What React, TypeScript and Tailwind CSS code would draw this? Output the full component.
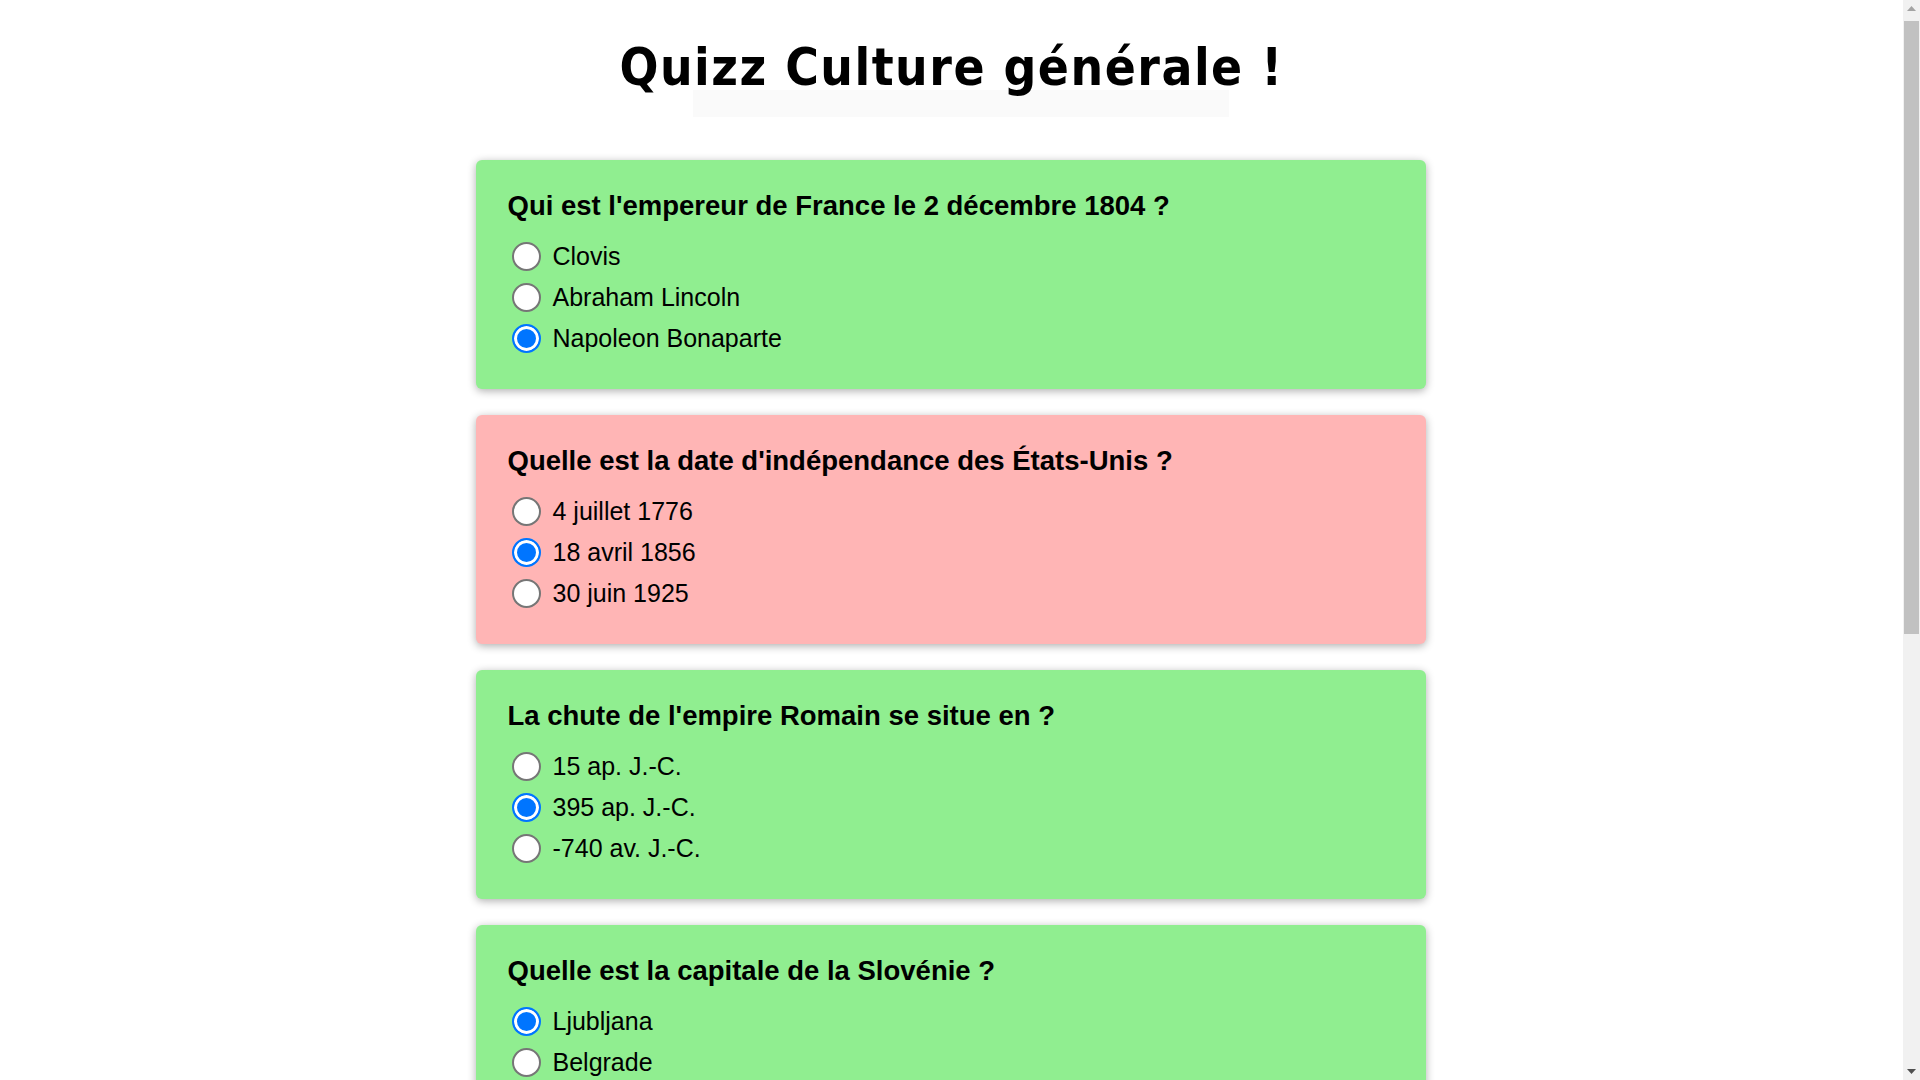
import React from 'react';

type Question = {
    id: number;
    label: string;
    options: string[];
    selected: number;
    correct: boolean;
};

const questions: Question[] = [
    { id: 1, label: "Qui est l'empereur de France le 2 décembre 1804 ?", options: ['Clovis', 'Abraham Lincoln', 'Napoleon Bonaparte'], selected: 2, correct: true },
    { id: 2, label: "Quelle est la date d'indépendance des États-Unis ?", options: ['4 juillet 1776', '18 avril 1856', '30 juin 1925'], selected: 1, correct: false },
    { id: 3, label: "La chute de l'empire Romain se situe en ?", options: ['15 ap. J.-C.', '395 ap. J.-C.', '-740 av. J.-C.'], selected: 1, correct: true },
    { id: 4, label: 'Quelle est la capitale de la Slovénie ?', options: ['Ljubljana', 'Belgrade', 'Bratislava'], selected: 0, correct: true },
    { id: 5, label: 'Quel est le plus long fleuve de France ?', options: ['La Seine', 'La Loire', 'Le Rhône'], selected: 1, correct: true },
    { id: 6, label: 'Combien de joueurs compte une équipe de football ?', options: ['9', '11', '15'], selected: 1, correct: true },
];

function QuestionCard({ q }: { q: Question }) {
    return (
        <div
            className={`w-[950px] mx-auto rounded-md px-8 pt-8 pb-[30px] shadow-[0_2px_9px_rgba(0,0,0,0.32)] ${q.correct ? 'bg-[#90ee90]' : 'bg-[#ffb5b5]'}`}
        >
            <h2 className="text-[27.5px] leading-7 font-bold text-black">{q.label}</h2>
            <div className="mt-4 flex flex-col">
                {q.options.map((opt, i) => (
                    <label key={opt} className="h-[41px] flex items-center text-[25px] text-black">
                        <input
                            type="radio"
                            name={`q${q.id}`}
                            defaultChecked={i === q.selected}
                            className="appearance-none w-[29px] h-[29px] ml-[4px] mr-3 m-0 shrink-0 rounded-full border-2 border-[#767676] bg-white checked:border-[#0075ff] checked:bg-[#0075ff] checked:shadow-[inset_0_0_0_3px_#ffffff]"
                        />
                        <span>{opt}</span>
                    </label>
                ))}
            </div>
        </div>
    );
}

// Window scrollbar, as shown in the screenshot
function Scrollbar() {
    return (
        <div className="w-[17px] h-screen shrink-0 bg-[#f1f1f1] flex flex-col items-center">
            <div className="h-[17px] flex items-center justify-center">
                <svg width="9" height="5" viewBox="0 0 9 5"><path d="M4.5 0L9 5H0z" fill="#a3a3a3" /></svg>
            </div>
            <div className="mt-[4px] w-[15px] h-[613px] bg-[#c1c1c1]" />
            <div className="flex-1" />
            <div className="h-[17px] flex items-center justify-center">
                <svg width="9" height="5" viewBox="0 0 9 5"><path d="M0 0H9L4.5 5z" fill="#505050" /></svg>
            </div>
        </div>
    );
}

export default function App() {
    return (
        <div
            className="h-screen flex overflow-hidden bg-white"
            style={{ fontFamily: '"Liberation Sans", Arial, sans-serif' }}
        >
            <div className="flex-1 min-w-0 overflow-hidden">
                <div className="pb-[178px]">
                    {/* Header */}
                    <div className="pt-[38px]">
                        <h1
                            className="relative z-10 text-center text-[51px] leading-[60px] font-bold tracking-[1.5px] text-black"
                            style={{ fontFamily: '"DejaVu Sans Condensed", "DejaVu Sans", sans-serif', fontStretch: 'condensed' }}
                        >
                            Quizz Culture générale !
                        </h1>
                        <div className="flex justify-center pl-[18px] -mt-[8px]">
                            <div className="w-[536px] h-[27px] bg-[#fafafa]" />
                        </div>
                    </div>

                    {/* Questions */}
                    <div className="mt-[43px] flex flex-col gap-[26px] pr-[2px]">
                        {questions.map((q) => (
                            <QuestionCard key={q.id} q={q} />
                        ))}
                    </div>
                </div>
            </div>
            <Scrollbar />
        </div>
    );
}
